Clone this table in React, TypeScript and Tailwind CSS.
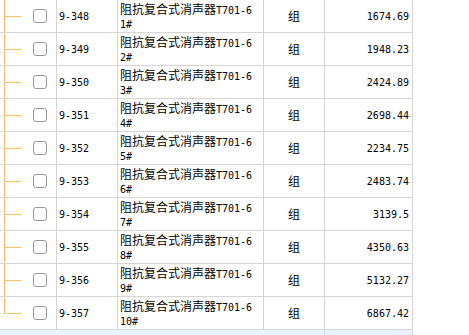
import React from "react";

const rows = [
  { code: "9-348", n: "1#", price: "1674.69" },
  { code: "9-349", n: "2#", price: "1948.23" },
  { code: "9-350", n: "3#", price: "2424.89" },
  { code: "9-351", n: "4#", price: "2698.44" },
  { code: "9-352", n: "5#", price: "2234.75" },
  { code: "9-353", n: "6#", price: "2483.74" },
  { code: "9-354", n: "7#", price: "3139.5" },
  { code: "9-355", n: "8#", price: "4350.63" },
  { code: "9-356", n: "9#", price: "5132.27" },
  { code: "9-357", n: "10#", price: "6867.42" },
];

const mono = "font-['DejaVu_Sans_Mono','Liberation_Mono',monospace] text-[10px]";
const cjk = "font-['Noto_Sans_CJK_SC','Noto_Sans',sans-serif] text-[12px]";

function Tree({ last }: { last: boolean }) {
  return (
    <svg width="22" height="32" className="shrink-0">
      <line x1="4.5" y1="0" x2="4.5" y2={last ? 16.5 : 32} stroke="#f8c06a" strokeWidth="1" />
      <line x1="4.5" y1="16.5" x2="21" y2="16.5" stroke="#f8c06a" strokeWidth="1" />
    </svg>
  );
}

export default function App() {
  return (
    <div className="w-[469px] h-[335px] bg-white overflow-hidden text-black">
      <div className="w-[413px]">
        {rows.map((r, i) => (
          <div key={r.code} className="flex h-[33px] border-b border-[#d6d6d6]">
            <div className="w-[57px] shrink-0 border-r border-[#d6d6d6] flex items-center">
              <Tree last={i === rows.length - 1} />
              <div className="ml-[11px] w-[14px] h-[14px] border border-[#999999] rounded-[3px] bg-white" />
            </div>
            <div className={`w-[61px] shrink-0 border-r border-[#d6d6d6] flex items-center pl-[2px] ${mono}`}>
              {r.code}
            </div>
            <div className="w-[146px] shrink-0 border-r border-[#d6d6d6] flex flex-col justify-center pl-[2px] leading-[14px]">
              <div className="whitespace-nowrap">
                <span className={cjk}>阻抗复合式消声器</span>
                <span className={mono}>T701-6</span>
              </div>
              <div className={mono}>{r.n}</div>
            </div>
            <div className={`w-[61px] shrink-0 border-r border-[#d6d6d6] flex items-center justify-center ${cjk}`}>
              组
            </div>
            <div className={`w-[88px] shrink-0 border-r border-[#d6d6d6] flex items-center justify-end pr-[3px] ${mono}`}>
              {r.price}
            </div>
          </div>
        ))}
        <div className="flex h-[10px] bg-[#e8f3fd]">
          <div className="w-[57px] shrink-0 border-r border-[#e8f3fd]" />
          <div className="w-[61px] shrink-0 border-r border-[#e8f3fd]" />
          <div className="w-[146px] shrink-0 border-r border-[#e8f3fd]" />
          <div className="w-[61px] shrink-0 border-r border-[#d6d6d6]" />
          <div className="w-[88px] shrink-0 border-r border-[#d6d6d6]" />
        </div>
      </div>
    </div>
  );
}
